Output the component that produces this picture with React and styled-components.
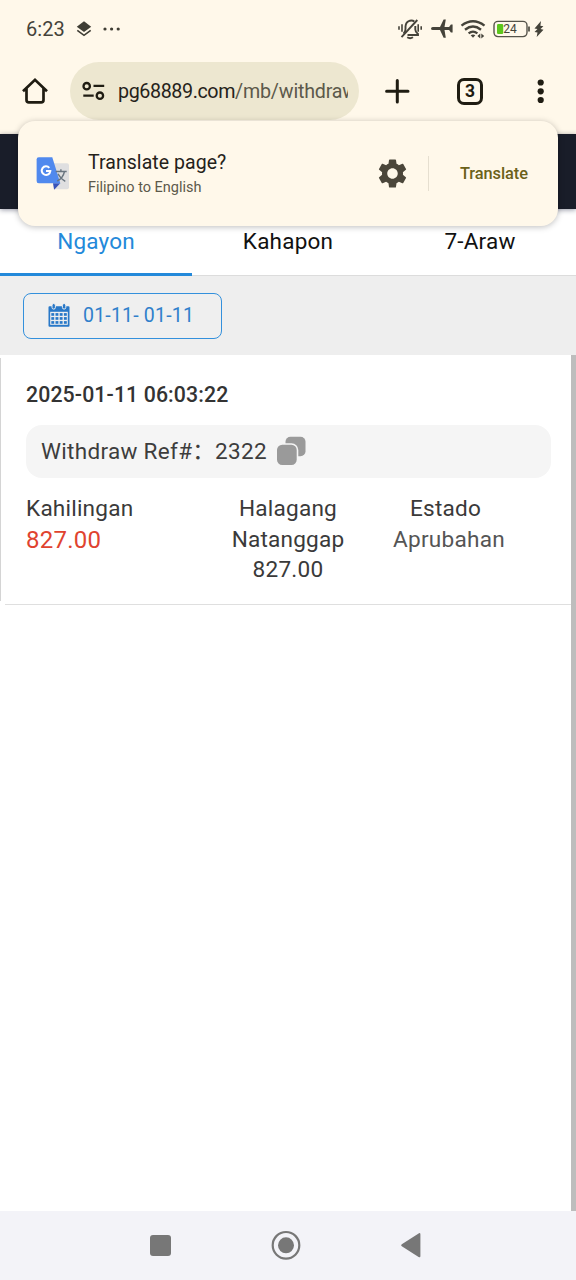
import React from "react";
import styled, { createGlobalStyle } from "styled-components";
import { MdSettings } from "react-icons/md";

const GlobalStyle = createGlobalStyle`
  * {
    box-sizing: border-box;
  }
  body {
    margin: 0;
    background: #fff;
    font-family: Roboto, "Noto Sans CJK SC", sans-serif;
  }
  svg {
    display: block;
    flex: none;
  }
`;

const Screen = styled.div`
  position: relative;
  display: flex;
  flex-direction: column;
  width: 576px;
  height: 1280px;
  overflow: hidden;
`;

const Text = styled.span`
  font-size: ${p => p.$size}px;
  font-weight: ${p => p.$weight || 400};
  color: ${p => p.$color};
  letter-spacing: ${p => p.$spacing || 0}px;
  line-height: ${p => p.$line || 30}px;
  white-space: nowrap;
`;

const StatusBar = styled.div`
  display: flex;
  align-items: center;
  height: 58px;
  padding: 0 32px 0 26px;
  background: #fff8ea;
`;

const StatusIcons = styled.div`
  display: flex;
  align-items: center;
  margin-left: ${p => (p.$end ? "auto" : "11px")};
`;

const Toolbar = styled.div`
  display: flex;
  align-items: center;
  height: 76px;
  padding: 4px 28px 14px 20px;
  background: #fff8ea;
`;

const AddressBar = styled.div`
  display: flex;
  align-items: center;
  width: 289px;
  height: 58px;
  margin: 0 24px 0 20px;
  padding: 0 11px;
  border-radius: 29px;
  background: #ede7d0;
`;

const Url = styled.div`
  width: 231px;
  margin-left: 12px;
  padding-top: 2px;
  overflow: hidden;
  white-space: nowrap;
`;

const TabCount = styled.div`
  display: flex;
  align-items: center;
  justify-content: center;
  width: 27px;
  height: 27px;
  margin: 0 50px 0 46px;
  border: 3px solid #1f1c12;
  border-radius: 7px;
`;

const SiteHeader = styled.div`
  height: 75px;
  background: #191d29;
  box-shadow: 0 1px 5px rgba(25, 29, 60, 0.45);
  z-index: 1;
`;

const TranslatePopup = styled.div`
  position: absolute;
  z-index: 2;
  top: 121px;
  left: 18px;
  display: flex;
  align-items: center;
  width: 540px;
  height: 105px;
  padding: 0 30px 0 18px;
  border-radius: 17px;
  background: #fff8ea;
  box-shadow: 0 1px 6px rgba(0, 0, 0, 0.26);
`;

const PopupLabels = styled.div`
  display: flex;
  flex-direction: column;
  margin: 0 auto 0 18px;
  padding-top: 3px;
`;

const Divider = styled.div`
  width: 1px;
  height: 35px;
  margin: 0 31px 0 18px;
  background: #e6dfd0;
`;

const Tabs = styled.div`
  display: flex;
  height: 67px;
  background: #fff;
  border-bottom: 1px solid #dcdcdc;
`;

const Tab = styled.div`
  display: flex;
  flex: 1;
  justify-content: center;
  height: 67px;
  padding-top: 17px;
  border-bottom: ${p => (p.$active ? "3px solid #2389da" : "none")};
`;

const FilterBar = styled.div`
  display: flex;
  align-items: center;
  height: 79px;
  padding: 0 23px;
  background: #eee;
`;

const DateButton = styled.div`
  display: flex;
  align-items: center;
  gap: 13px;
  width: 199px;
  height: 46px;
  padding-left: 24px;
  border: 1px solid #3390dc;
  border-radius: 8px;
  background: #efefef;
`;

const Content = styled.div`
  display: flex;
  flex: 1;
  background: #fff;
`;

const List = styled.div`
  flex: 1;
`;

const ScrollTrack = styled.div`
  width: 5px;
  background: #bdbdbd;
`;

const Record = styled.div`
  height: 250px;
  padding: 25px 20px 0 26px;
  background:
    linear-gradient(#d4d4d4, #d4d4d4) 0 3px / 1px 243px no-repeat,
    linear-gradient(#dfdfdf, #dfdfdf) 5px 249px / 566px 1px no-repeat;
`;

const RefBox = styled.div`
  display: flex;
  align-items: center;
  height: 53px;
  margin-top: 15px;
  padding: 0 0 2px 15px;
  border-radius: 16px;
  background: #f5f5f5;
`;

const Columns = styled.div`
  display: grid;
  grid-template-columns: 183px 158px 157px;
  margin-top: 16px;
`;

const Column = styled.div`
  display: flex;
  flex-direction: column;
  align-items: ${p => (p.$left ? "flex-start" : "center")};
`;

const Status = styled.div`
  display: flex;
  padding-left: ${p => p.$indent || 0}px;
`;

const NavBar = styled.div`
  display: flex;
  align-items: center;
  height: 69px;
  padding: 0 0 2px 149px;
  background: #f3f3f8;
`;

function LayersIcon() {
  return (
    <svg width="16" height="18" viewBox="0 0 16 18">
      <path d="M8 1.2 15.2 6.7 8 12 .8 6.7Z" fill="#3f3d34" />
      <path
        d="m1.3 10.3 6.7 5 6.7-5"
        fill="none"
        stroke="#3f3d34"
        strokeWidth="1.6"
      />
    </svg>
  );
}

function MoreDots() {
  return (
    <svg width="20" height="6" viewBox="0 0 20 6" style={{ marginLeft: 10 }}>
      <g fill="#3f3d34">
        <circle cx="3" cy="3" r="1.6" />
        <circle cx="9.6" cy="3" r="1.6" />
        <circle cx="16.2" cy="3" r="1.6" />
      </g>
    </svg>
  );
}

// bell, airplane, wifi, battery and bolt share one strip
function SystemIcons() {
  return (
    <svg width="148" height="24" viewBox="396 17 148 24">
      <g fill="none" stroke="#45433a" strokeWidth="1.9">
        <path d="M403.5 33.5q2-1.5 2-4.5v-2.5q.3-4.6 4.4-5.8 2.6-.6 4.4.8M415.3 26v3.5q0 2.5 2.7 4.5v1h-10.5" />
        <path d="M401.5 37.2 417.3 20" />
        <path d="M402 24.3v7.4M399 26.2v3.6M418.2 24.3v7.4M421.2 26.2v3.6" strokeWidth="1.6" />
        <path d="M407.2 37.3q2.9 1.9 5.8 0" />
      </g>
      <path
        d="M431 28.5q0-1.5 1.8-1.6h7.2l3.6-7.4h2.2l-1.3 7.4h4.6l1.8-2.4h1.7v8h-1.7l-1.8-2.4h-4.6l1.3 7.6h-2.2l-3.6-7.6h-7.2q-1.8-.1-1.8-1.6"
        fill="#45433a"
      />
      <g fill="none" stroke="#45433a" strokeWidth="2.4">
        <path d="M461.5 25.6q11.5-8.7 23 0" />
        <path d="M465 29.7q8-6.2 16 0" />
        <path d="M468.6 33.4q4.4-3.6 8.8 0" strokeWidth="2.2" />
      </g>
      <path d="M470.7 35.3q2.3-1.4 4.6 0L473 37.8Z" fill="#45433a" />
      <path d="m477.4 36 2.9-2.6v5.2ZM481.3 33.4v5.2l2.9-2.6Z" fill="#45433a" />
      <rect x="494" y="21.4" width="33" height="15.2" rx="4" fill="none" stroke="#55534a" strokeWidth="1.4" />
      <rect x="497" y="24" width="6.2" height="10" rx="1.2" fill="#5cc61c" />
      <path d="M529 26.5v5" stroke="#55534a" strokeWidth="1.8" />
      <text x="503.3" y="33.2" fontFamily="Roboto" fontSize="12" fill="#45433a">
        24
      </text>
      <path d="m541 21-6.5 7.6 3 .5-3 2.8 3 .5-.8 4.7 6.8-7.4-3-.6 2.9-2.9-3-.5Z" fill="#45433a" />
    </svg>
  );
}

function HomeIcon() {
  return (
    <svg width="30" height="30" viewBox="0 0 30 30">
      <path
        d="M3 15.2 15 3.8 27 15.2M6.5 12.4V24q0 2.4 2.4 2.4h12.2q2.4 0 2.4-2.4V12.4"
        fill="none"
        stroke="#1f1c12"
        strokeWidth="2.7"
      />
    </svg>
  );
}

function TuneIcon() {
  return (
    <svg width="25" height="22" viewBox="0 0 25 22">
      <g fill="none" stroke="#1f1c12" strokeWidth="2.3">
        <circle cx="5.7" cy="6.2" r="3.2" />
        <path d="M12.5 5.8h10.7M2.3 15.7h10.4" />
        <circle cx="18.9" cy="15.7" r="3.2" />
      </g>
    </svg>
  );
}

function PlusIcon() {
  return (
    <svg width="28" height="28" viewBox="0 0 28 28">
      <path
        d="M14.3 3.6v21.4M3.6 14.3h21.4"
        stroke="#1f1c12"
        strokeWidth="3"
        strokeLinecap="round"
      />
    </svg>
  );
}

function MenuDots() {
  return (
    <svg width="15" height="28" viewBox="0 0 15 28">
      <g fill="#1f1c12">
        <circle cx="7.7" cy="5.5" r="3.1" />
        <circle cx="7.7" cy="14.3" r="3.1" />
        <circle cx="7.7" cy="23" r="3.1" />
      </g>
    </svg>
  );
}

function GoogleTranslateIcon() {
  return (
    <svg width="34" height="34" viewBox="0 0 34 34">
      <path d="M16 6.3h15q2 0 2 2v22q0 2-2 2H17.5Z" fill="#dfdfe0" />
      <path d="M17 26.3h7.3l-6.1 6.4Z" fill="#3753b9" />
      <path d="M2.8.3h13.5l8 26H2.8q-2.2 0-2.2-2.2V2.5Q.6.3 2.8.3Z" fill="#5089ee" />
      <path
        d="M13.3 10.8A4.3 4.3 0 1 0 14.3 14.1H10"
        fill="none"
        stroke="#fff"
        strokeWidth="2"
      />
      <path
        d="M19.7 14.5h11M24.9 12.2v2.3M28.5 14.5q-1.5 6.7-7.3 9.5M22 16.8q2.3 4.8 7.3 7.6"
        fill="none"
        stroke="#69757f"
        strokeWidth="1.4"
      />
    </svg>
  );
}

function CalendarIcon() {
  const cols = [3.3, 7.5, 11.7, 15.9];
  const rows = [10.1, 14.1, 18.1];
  return (
    <svg width="22" height="25" viewBox="0 0 22 25">
      <path d="M1.5 3.3h19q1 0 1 1v18.4q0 1-1 1h-19q-1 0-1-1V4.3q0-1 1-1Z" fill="#2878c8" />
      <path d="M2.2 8.8h17.6v13H2.2Z" fill="#efefef" />
      <g fill="#2878c8" stroke="#efefef" strokeWidth="1">
        <rect x="4" y=".5" width="3.4" height="5.6" rx="1.7" />
        <rect x="14.4" y=".5" width="3.4" height="5.6" rx="1.7" />
      </g>
      {rows.map(y =>
        cols.map(x => (
          <rect key={`${x}_${y}`} x={x} y={y} width="2.9" height="2.7" fill="#2878c8" />
        ))
      )}
    </svg>
  );
}

function CopyIcon() {
  return (
    <svg width="30" height="30" viewBox="0 0 30 30" style={{ marginLeft: 9 }}>
      <rect x="9.5" y=".8" width="20" height="19.5" rx="5" fill="#9a9a9a" />
      <rect x=".2" y="8" width="21.3" height="21.8" rx="6" fill="#9a9a9a" stroke="#f5f5f5" strokeWidth="1.6" />
    </svg>
  );
}

function NavIcons() {
  return (
    <svg width="274" height="32" viewBox="149 1229 274 32">
      <g fill="#777">
        <rect x="150" y="1235" width="21" height="21" rx="3" />
        <circle cx="286" cy="1245.3" r="8" />
        <path d="M401.8 1244.3 418.6 1233.4Q420.4 1232.5 420.4 1234.5V1256Q420.4 1258 418.6 1257L401.8 1246.2Q400.3 1245.3 401.8 1244.3Z" />
      </g>
      <circle cx="286" cy="1245.3" r="13.3" fill="none" stroke="#777" strokeWidth="2.2" />
    </svg>
  );
}

const tabs = ["Ngayon", "Kahapon", "7-Araw"];

const columns = [
  { lines: ["Kahilingan"], value: "827.00", color: "#e0432f", size: 24, left: true },
  { lines: ["Halagang", "Natanggap"], value: "827.00", color: "#3a3a3a", size: 22.6 },
  { lines: ["Estado"], value: "Aprubahan", color: "#555", size: 22.6, indent: 7 }
];

export default function App() {
  return (
    <Screen>
      <GlobalStyle />
      <StatusBar>
        <Text $size={20} $color="#45433a" $spacing={0.1}>6:23</Text>
        <StatusIcons>
          <LayersIcon />
          <MoreDots />
        </StatusIcons>
        <StatusIcons $end>
          <SystemIcons />
        </StatusIcons>
      </StatusBar>
      <Toolbar>
        <HomeIcon />
        <AddressBar>
          <TuneIcon />
          <Url>
            <Text $size={19.7} $color="#25221a" $spacing={-0.4}>pg68889.com</Text>
            <Text $size={19.7} $color="#5c594b" $spacing={-0.2}>/mb/withdraw</Text>
          </Url>
        </AddressBar>
        <PlusIcon />
        <TabCount>
          <Text $size={17.5} $weight={700} $color="#1f1c12">3</Text>
        </TabCount>
        <MenuDots />
      </Toolbar>
      <SiteHeader />
      <Tabs>
        {tabs.map((name, i) => (
          <Tab key={name} $active={i === 0}>
            <Text $size={22.5} $color={i === 0 ? "#2389da" : "#111"} $spacing={0.2}>{name}</Text>
          </Tab>
        ))}
      </Tabs>
      <FilterBar>
        <DateButton>
          <CalendarIcon />
          <Text $size={19.5} $line={28} $color="#2f7fcb" $spacing={0.2}>01-11- 01-11</Text>
        </DateButton>
      </FilterBar>
      <Content>
        <List>
          <Record>
            <Text as="div" $size={21.3} $weight={500} $color="#333" $spacing={0.1}>2025-01-11 06:03:22</Text>
            <RefBox>
              <Text $size={22.5} $color="#3d3d3d" $spacing={0.31}>Withdraw Ref#：2322</Text>
              <CopyIcon />
            </RefBox>
            <Columns>
              {columns.map(c => (
                <Column key={c.lines[0]} $left={c.left}>
                  {c.lines.map(line => (
                    <Text key={line} $size={22.6} $line={30.7} $color="#3a3a3a" $spacing={0.2}>{line}</Text>
                  ))}
                  <Status $indent={c.indent}>
                    <Text $size={c.size} $line={30.7} $color={c.color} $spacing={0.25}>{c.value}</Text>
                  </Status>
                </Column>
              ))}
            </Columns>
          </Record>
        </List>
        <ScrollTrack />
      </Content>
      <NavBar>
        <NavIcons />
      </NavBar>
      <TranslatePopup>
        <GoogleTranslateIcon />
        <PopupLabels>
          <Text $size={19.5} $line={26} $color="#25221a" $spacing={0.05}>Translate page?</Text>
          <Text $size={14.5} $line={24} $color="#5c594b">Filipino to English</Text>
        </PopupLabels>
        <MdSettings size={35} color="#4b463a" />
        <Divider />
        <Text $size={16.4} $weight={500} $color="#6b6119" $spacing={-0.05}>Translate</Text>
      </TranslatePopup>
    </Screen>
  );
}
